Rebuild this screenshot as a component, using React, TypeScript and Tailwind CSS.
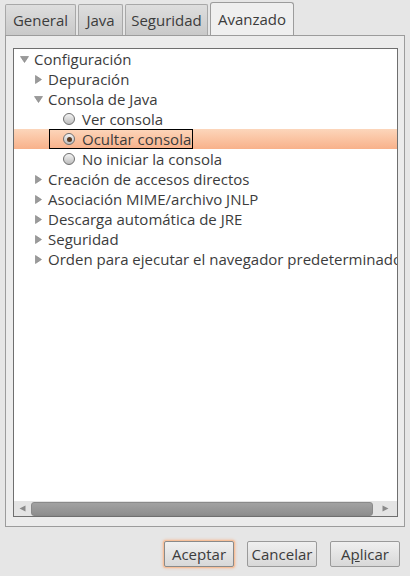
const font = { fontFamily: '"Open Sans", "DejaVu Sans", sans-serif' };

function Arrow({ open }: { open: boolean }) {
  return (
    <svg width="9" height="9" viewBox="0 0 9 9" className="shrink-0">
      {open ? (
        <path d="M0.5 1.5 L8.5 1.5 L4.5 7.5 Z" fill="#9a9a9a" stroke="#808080" strokeWidth="0.6" />
      ) : (
        <path d="M1.5 0.5 L7.5 4.5 L1.5 8.5 Z" fill="#9a9a9a" stroke="#808080" strokeWidth="0.6" />
      )}
    </svg>
  );
}

function Radio({ on }: { on?: boolean }) {
  return (
    <span className="flex h-[12px] w-[12px] shrink-0 items-center justify-center rounded-full border border-[#6e6e6e] bg-gradient-to-b from-[#f4f4f4] to-[#bdbdbd]">
      {on && <span className="h-[5px] w-[5px] rounded-full bg-[#5a3a22]" />}
    </span>
  );
}

type Row = { label: string; level: number; kind: "open" | "closed" | "radio"; on?: boolean; selected?: boolean };

const rows: Row[] = [
  { label: "Configuración", level: 0, kind: "open" },
  { label: "Depuración", level: 1, kind: "closed" },
  { label: "Consola de Java", level: 1, kind: "open" },
  { label: "Ver consola", level: 2, kind: "radio" },
  { label: "Ocultar consola", level: 2, kind: "radio", on: true, selected: true },
  { label: "No iniciar la consola", level: 2, kind: "radio" },
  { label: "Creación de accesos directos", level: 1, kind: "closed" },
  { label: "Asociación MIME/archivo JNLP", level: 1, kind: "closed" },
  { label: "Descarga automática de JRE", level: 1, kind: "closed" },
  { label: "Seguridad", level: 1, kind: "closed" },
  { label: "Orden para ejecutar el navegador predeterminado", level: 1, kind: "closed" },
];

const indent = ["pl-[6px]", "pl-[20px]", "pl-[35px]"];

function TreeRow({ row }: { row: Row }) {
  return (
    <div
      className={`flex h-[20px] items-center whitespace-nowrap ${indent[row.level]} ${
        row.selected ? "bg-gradient-to-b from-[#fcd6bb] to-[#f8b18a]" : ""
      }`}
    >
      {row.kind === "radio" ? (
        <div
          className={`flex h-[20px] items-center gap-[7px] pl-[13px] pr-[1px] ${
            row.selected ? "border border-black" : "border border-transparent"
          }`}
        >
          <Radio on={row.on} />
          <span className="text-[15px] text-[#3c3c3c]">{row.label}</span>
        </div>
      ) : (
        <div className="flex items-center gap-[5px]">
          <Arrow open={row.kind === "open"} />
          <span className="text-[15px] text-[#3c3c3c]">{row.label}</span>
        </div>
      )}
    </div>
  );
}

function Tab({ label, w, active }: { label: string; w: string; active?: boolean }) {
  return active ? (
    <div
      className={`-mb-px flex h-[34px] items-center justify-center rounded-t-[3px] border border-b-0 border-[#9c9c9c] bg-[#efefef] text-[15px] text-[#3c3c3c] ${w}`}
    >
      {label}
    </div>
  ) : (
    <div
      className={`flex h-[31px] items-center justify-center rounded-t-[2px] border border-b-0 border-[#a8a8a8] bg-gradient-to-b from-[#dedede] to-[#c9c9c9] text-[15px] text-[#3c3c3c] ${w}`}
    >
      {label}
    </div>
  );
}

function Button({ label, focus }: { label: React.ReactNode; focus?: boolean }) {
  return (
    <div
      className={`flex h-[26px] w-[70px] items-center justify-center rounded-[2px] border bg-gradient-to-b from-[#f0f0f0] to-[#d8d8d8] text-[15px] text-[#3c3c3c] ${
        focus ? "border-[#8a8a8a] shadow-[0_0_0_1px_#f7c09a,0_0_3px_1px_#f6b38a]" : "border-[#9a9a9a]"
      }`}
    >
      {label}
    </div>
  );
}

export default function App() {
  return (
    <div className="flex h-[576px] w-[410px] flex-col bg-[#e6e6e6]" style={font}>
      <div className="flex items-end gap-[2px] pl-[5px] pt-[2px]">
        <Tab label="General" w="w-[71px]" />
        <Tab label="Java" w="w-[45px]" />
        <Tab label="Seguridad" w="w-[83px]" />
        <Tab label="Avanzado" w="w-[84px]" active />
      </div>
      <div className="mx-[5px] flex h-[492px] flex-col border border-[#9c9c9c] bg-[#ececec] pb-[9px] pl-[7px] pr-[6px] pt-[12px]">
        <div className="flex flex-1 flex-col overflow-hidden border border-[#6f6f6f] bg-white">
          <div className="flex-1 overflow-hidden">
            {rows.map((r) => (
              <TreeRow key={r.label} row={r} />
            ))}
          </div>
          <div className="flex h-[15px] items-center bg-[#e4e4e4]">
            <div className="flex w-[17px] justify-center">
              <svg width="7" height="7" viewBox="0 0 7 7">
                <path d="M6.5 0.5 L0.5 3.5 L6.5 6.5 Z" fill="#8a8a8a" />
              </svg>
            </div>
            <div className="h-[14px] flex-1 rounded-[3px] border border-[#8a8a8a] bg-gradient-to-b from-[#a2a2a2] to-[#8e8e8e]" />
            <div className="flex w-[24px] justify-center">
              <svg width="7" height="7" viewBox="0 0 7 7">
                <path d="M0.5 0.5 L6.5 3.5 L0.5 6.5 Z" fill="#8a8a8a" />
              </svg>
            </div>
          </div>
        </div>
      </div>
      <div className="flex justify-end gap-[13px] pr-[10px] pt-[14px]">
        <Button label="Aceptar" focus />
        <Button label="Cancelar" />
        <Button
          label={
            <span>
              A<span className="underline">p</span>licar
            </span>
          }
        />
      </div>
    </div>
  );
}
